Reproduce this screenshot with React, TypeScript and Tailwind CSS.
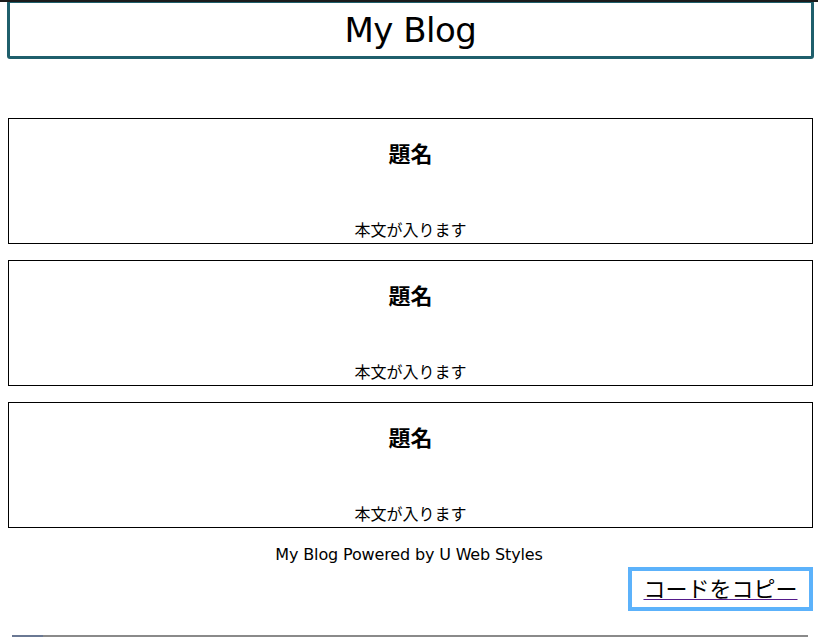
import React from "react";

const posts = [1, 2, 3];

const App = () => {
  return (
    <div
      className="h-[639px] overflow-hidden bg-white text-black"
      style={{ fontFamily: '"DejaVu Sans", "Noto Sans CJK JP", sans-serif' }}
    >
      <div className="relative">
        <div className="absolute left-0 right-0 top-0 h-[2px] bg-[#1c1c1c]" />
      </div>
      <header className="ml-[7px] flex h-[59px] w-[807px] items-center justify-center rounded-[3px] border-[3px] border-[#1f5f6c]">
        <h1 className="text-[34px] leading-none tracking-[-0.5px]">My Blog</h1>
      </header>

      <main className="ml-2 mt-[59px] flex w-[805px] flex-col gap-4">
        {posts.map((p) => (
          <article
            key={p}
            className="flex h-[126px] flex-col items-center border border-black"
          >
            <h2
              className="mt-[20px] text-[22px] font-bold leading-[26px]"
              style={{ fontFamily: '"Noto Sans CJK JP", sans-serif' }}
            >
              題名
            </h2>
            <p
              className="mt-auto mb-[3px] text-[16px] leading-[22px]"
              style={{ fontFamily: '"Noto Sans CJK JP", sans-serif' }}
            >
              本文が入ります
            </p>
          </article>
        ))}
      </main>

      <footer className="mt-[15px] w-[818px] text-center text-[16px] leading-[24px] tracking-[-0.15px]">
        My Blog Powered by U Web Styles
      </footer>

      <div className="flex w-[818px] justify-end pr-[5px]">
        <a
          href="#"
          className="flex h-[44px] w-[185px] items-center justify-center border-4 border-[#5cb2fb] pb-[4px] text-[22px] text-black underline decoration-[#551a8b] decoration-1 underline-offset-[2px]"
          style={{ fontFamily: '"Noto Sans CJK JP", sans-serif' }}
        >
          コードをコピー
        </a>
      </div>

      <div className="ml-[12px] mt-[24px] flex h-[2px] w-[796px]">
        <div className="w-[31px] bg-[#6a7893]" />
        <div className="flex-1 bg-[#8a8a8a]" />
      </div>
    </div>
  );
};

export default App;
